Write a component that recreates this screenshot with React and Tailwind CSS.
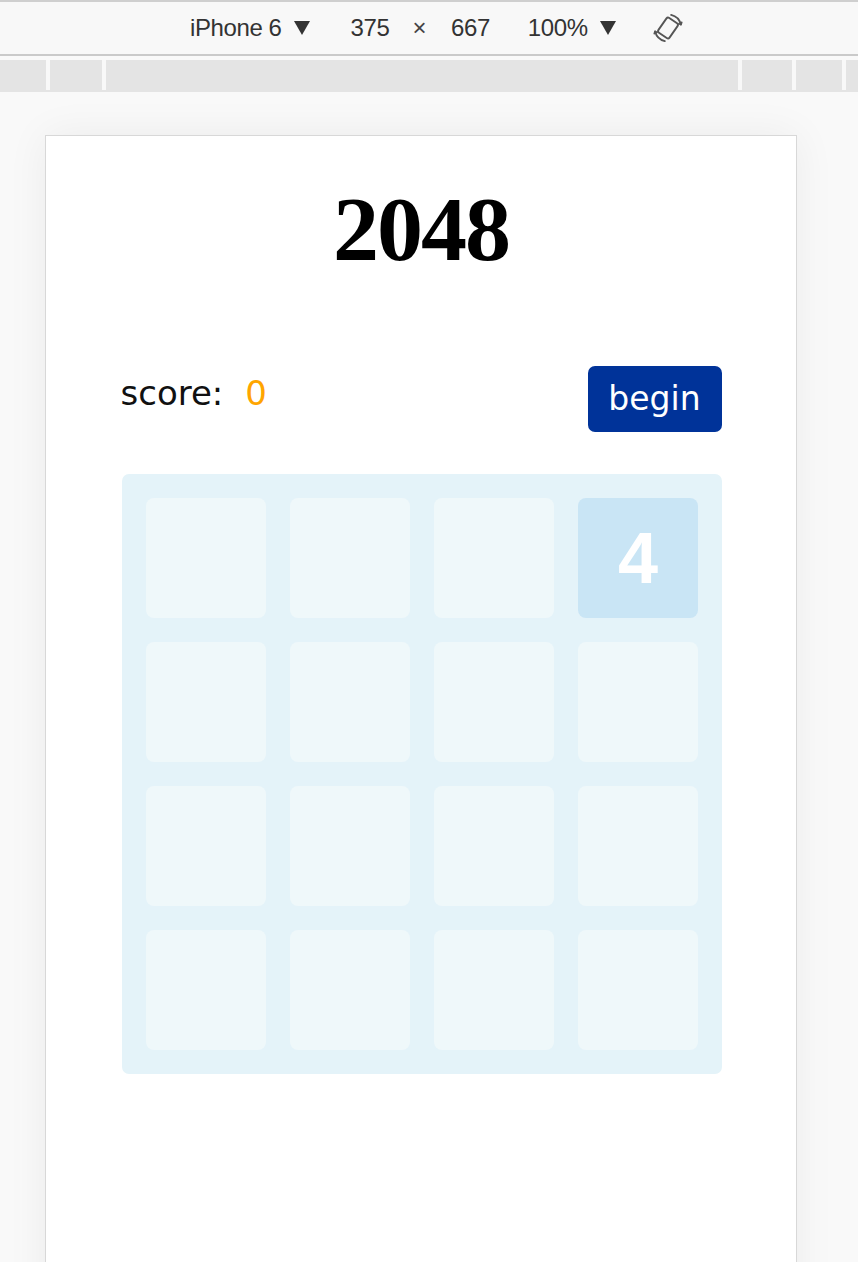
import React from "react";

function Tri() {
  return (
    <svg width="16" height="14" viewBox="0 0 16 14" className="block">
      <polygon points="0,0 16,0 8,14" fill="#333" />
    </svg>
  );
}

function RotateIcon() {
  return (
    <svg width="30" height="30" viewBox="0 0 24 24" fill="none" stroke="#555" strokeWidth="1.5" strokeLinecap="round" strokeLinejoin="round" className="block">
      <rect x="6.6" y="4.8" width="10.8" height="14.4" rx="1.6" transform="rotate(35 12 12)" />
      <path d="M14.5 1.5 A10.6 10.6 0 0 1 22.3 9.2" />
      <path d="M20.8 8.6 L22.3 9.2 L22.9 7.6" />
      <path d="M9.5 22.5 A10.6 10.6 0 0 1 1.7 14.8" />
      <path d="M3.2 15.4 L1.7 14.8 L1.1 16.4" />
    </svg>
  );
}

const cells = [
  0, 0, 0, 4,
  0, 0, 0, 0,
  0, 0, 0, 0,
  0, 0, 0, 0,
];

export default function App() {
  return (
    <div className="w-[858px] h-[1262px] overflow-hidden bg-[#f9f9f9]" style={{ fontFamily: '"Liberation Sans", Arial, sans-serif' }}>
      {/* device toolbar */}
      <div className="h-[56px] bg-[#f8f8f8] border-t-[2px] border-t-[#cfcfcf] border-b-[2px] border-b-[#cacaca] flex items-center pl-[190px] text-[#333] text-[24px] tracking-[-0.4px]">
        <span>iPhone 6</span>
        <span className="ml-[12px]"><Tri /></span>
        <span className="ml-[41px]">375</span>
        <span className="ml-[23px] text-[24px] text-[#444]">×</span>
        <span className="ml-[25px]">667</span>
        <span className="ml-[38px]">100%</span>
        <span className="ml-[12px]"><Tri /></span>
        <span className="ml-[37px]"><RotateIcon /></span>
      </div>
      {/* ruler */}
      <div className="mt-[4px] h-[32px] bg-[#e4e4e4] flex items-start">
        <div className="w-[46px]" />
        <div className="w-[4px] h-[30px] bg-[#f8f8f8]" />
        <div className="w-[52px]" />
        <div className="w-[4px] h-[30px] bg-[#f8f8f8]" />
        <div className="w-[632px]" />
        <div className="w-[4px] h-[30px] bg-[#f8f8f8]" />
        <div className="w-[50px]" />
        <div className="w-[4px] h-[30px] bg-[#f8f8f8]" />
        <div className="w-[46px]" />
        <div className="w-[4px] h-[30px] bg-[#f8f8f8]" />
      </div>
      {/* device frame */}
      <div className="ml-[45px] mt-[43px] w-[752px] h-[1334px] bg-white border border-[#d8d8d8] shadow-[0_0_40px_rgba(0,0,0,0.06)]">
        <h1
          className="pt-[47px] text-center text-[92px] leading-none font-bold text-black tracking-[-2px]"
          style={{ fontFamily: '"Liberation Serif", "Times New Roman", serif' }}
        >
          2048
        </h1>
        <div className="mt-[91px] mx-auto w-[601px] flex items-start justify-between">
          <div
            className="mt-[10px] text-[34px] leading-[34px] text-[#111]"
            style={{ fontFamily: '"DejaVu Sans", sans-serif' }}
          >
            score:<span className="ml-[22px] text-[#ffa500]">0</span>
          </div>
          <button
            className="w-[134px] h-[66px] rounded-[7px] bg-[#003399] text-white text-[33px] leading-none flex items-center justify-center pb-[2px]"
            style={{ fontFamily: '"DejaVu Sans", sans-serif' }}
          >
            begin
          </button>
        </div>
        <div className="mt-[42px] ml-[76px] w-[600px] h-[600px] rounded-[7px] bg-[#e4f3f9] p-[24px] grid grid-cols-4 gap-[24px]">
          {cells.map((v, i) => (
            <div
              key={i}
              className={
                v
                  ? "w-[120px] h-[120px] rounded-[8px] bg-[#c9e5f5] flex items-center justify-center text-white font-bold text-[72px] leading-none"
                  : "w-[120px] h-[120px] rounded-[8px] bg-[#eff8fa]"
              }
              style={v ? { fontFamily: '"Liberation Sans", Arial, sans-serif' } : undefined}
            >
              {v ? v : null}
            </div>
          ))}
        </div>
      </div>
    </div>
  );
}
